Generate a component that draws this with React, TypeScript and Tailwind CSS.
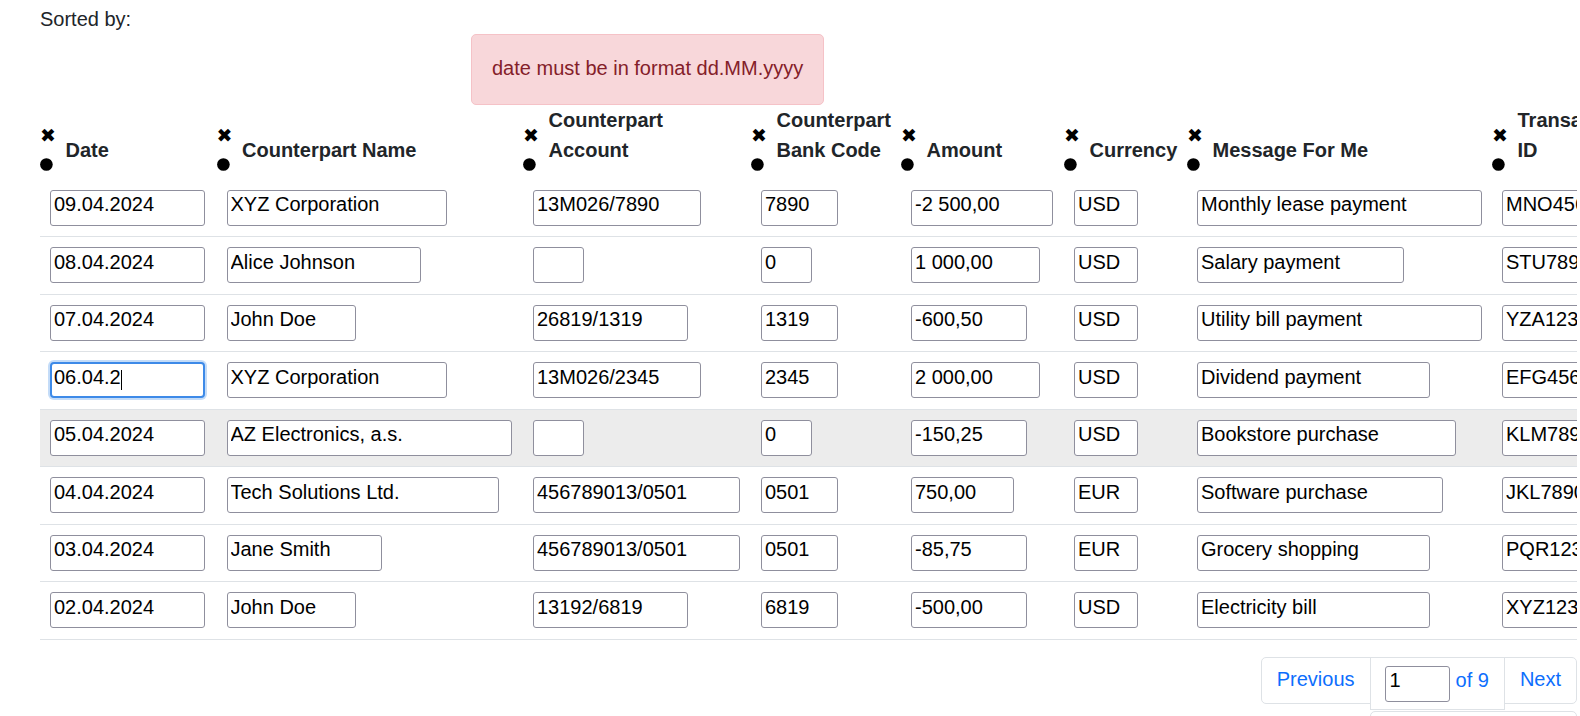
import React from "react";

type Row = {
  date: string;
  name: string;
  account: string;
  bank: string;
  amount: string;
  currency: string;
  message: string;
  id: string;
  amountSize?: number;
  focused?: boolean;
  hover?: boolean;
};

const columns = [
  { lines: ["Date"], className: "w-[176.5px]" },
  { lines: ["Counterpart Name"], className: "w-[306.5px]" },
  { lines: ["Counterpart", "Account"], className: "w-[228px]" },
  { lines: ["Counterpart", "Bank Code"], className: "w-[150px]" },
  { lines: ["Amount"], className: "w-[163px]" },
  { lines: ["Currency"], className: "w-[123px]" },
  { lines: ["Message For Me"], className: "w-[305px]" },
  { lines: ["Transaction", "ID"], className: "w-[200px]" },
];

const rows: Row[] = [
  { date: "09.04.2024", name: "XYZ Corporation", account: "13M026/7890", bank: "7890", amount: "-2 500,00", currency: "USD", message: "Monthly lease payment", id: "MNO4567890" },
  { date: "08.04.2024", name: "Alice Johnson", account: "", bank: "0", amount: "1 000,00", currency: "USD", message: "Salary payment", id: "STU7890123" },
  { date: "07.04.2024", name: "John Doe", account: "26819/1319", bank: "1319", amount: "-600,50", currency: "USD", message: "Utility bill payment", id: "YZA1234567" },
  { date: "06.04.2", name: "XYZ Corporation", account: "13M026/2345", bank: "2345", amount: "2 000,00", currency: "USD", message: "Dividend payment", id: "EFG4567890", focused: true },
  { date: "05.04.2024", name: "AZ Electronics, a.s.", account: "", bank: "0", amount: "-150,25", currency: "USD", message: "Bookstore purchase", id: "KLM7890123", hover: true },
  { date: "04.04.2024", name: "Tech Solutions Ltd.", account: "456789013/0501", bank: "0501", amount: "750,00", currency: "EUR", message: "Software purchase", id: "JKL7890123" },
  { date: "03.04.2024", name: "Jane Smith", account: "456789013/0501", bank: "0501", amount: "-85,75", currency: "EUR", message: "Grocery shopping", id: "PQR1234567", amountSize: 7 },
  { date: "02.04.2024", name: "John Doe", account: "13192/6819", bank: "6819", amount: "-500,00", currency: "USD", message: "Electricity bill", id: "XYZ1234567" },
];

// width follows the input's size attribute (chars), clamped like the original
const sizeWidth = (chars: number) => 13 * Math.min(Math.max(chars, 2), 20) + 25.4;

const CellInput = ({ value, size }: { value: string; size?: number }) => (
  <input
    readOnly
    defaultValue={value}
    style={{ width: sizeWidth(size ?? value.length) }}
    className="block h-[36px] rounded-[3px] border border-[#8f8f9d] bg-white pl-[3px] pr-[3px] pt-0 pb-[6px] text-black outline-none"
  />
);

const FocusedInput = ({ value }: { value: string }) => (
  <div className="relative w-fit">
    <input
      readOnly
      defaultValue={value}
      style={{ width: sizeWidth(10) }}
      className="block h-[36px] rounded-[4px] border-2 border-[#3d8ae8] bg-white pl-[2px] pr-[2px] pt-0 pb-[6px] text-black shadow-[0_0_0_2px_rgba(61,138,232,0.3)] outline-none"
    />
    <span className="absolute left-[71px] top-[8px] h-[20px] w-px bg-black" />
  </div>
);

const DotIcon = () => (
  <svg width="13" height="13" viewBox="0 0 13 13" className="block shrink-0">
    <circle cx="6.4" cy="6.5" r="6.3" fill="#000" />
  </svg>
);

export default function App() {
  return (
    <div className="h-[716px] w-[1577px] overflow-hidden bg-white font-['Liberation_Sans',Arial,sans-serif] text-[20px] leading-[30px] text-[#212529]">
      <div className="pl-[40px] pt-[4px]">Sorted by:</div>

      <div className="ml-[471px] w-fit rounded-[5px] border border-[#f5c2c7] bg-[#f8d7da] px-[20px] pt-[18px] pb-[21px] text-[#842029]">
        date must be in format dd.MM.yyyy
      </div>

      <div className="pl-[40px]">
        <table className="w-[1652px] table-fixed">
          <thead>
            <tr>
              {columns.map((col, i) => (
                <th key={i} className={`${col.className} p-0 text-left align-bottom font-bold`}>
                  <div className="flex items-end">
                    <div className="flex w-[15px] shrink-0 flex-col">
                      <div className="h-[30px] font-['DejaVu_Sans',sans-serif] text-[19px] leading-[30px] font-normal text-black">
                        ✖
                      </div>
                      <div className="flex h-[30px] items-center">
                        <DotIcon />
                      </div>
                    </div>
                    <div className="ml-[10.5px] pb-[14.5px]">
                      {col.lines.map((line) => (
                        <div key={line} className="whitespace-nowrap">
                          {line}
                        </div>
                      ))}
                    </div>
                  </div>
                </th>
              ))}
            </tr>
          </thead>
          <tbody>
            {rows.map((row, i) => (
              <tr key={i} className={`border-b border-[#dee2e6] ${row.hover ? "bg-[#ececec]" : ""}`}>
                <td className="py-[10.25px] pl-[10px]">
                  {row.focused ? <FocusedInput value={row.date} /> : <CellInput value={row.date} />}
                </td>
                <td className="py-[10.25px] pl-[10px]">
                  <CellInput value={row.name} />
                </td>
                <td className="py-[10.25px] pl-[10px]">
                  <CellInput value={row.account} />
                </td>
                <td className="py-[10.25px] pl-[10px]">
                  <CellInput value={row.bank} />
                </td>
                <td className="py-[10.25px] pl-[10px]">
                  <CellInput value={row.amount} size={row.amountSize} />
                </td>
                <td className="py-[10.25px] pl-[10px]">
                  <CellInput value={row.currency} />
                </td>
                <td className="py-[10.25px] pl-[10px]">
                  <CellInput value={row.message} />
                </td>
                <td className="py-[10.25px] pl-[10px]">
                  <CellInput value={row.id} />
                </td>
              </tr>
            ))}
          </tbody>
        </table>
      </div>

      <div className="mt-[17px] flex items-start justify-end">
        <div className="rounded-l-[5px] border border-[#dee2e6] px-[15px] pt-[6.5px] pb-[8.5px] text-[#0d6efd]">Previous</div>
        <div className="-ml-px flex items-baseline border border-[#dee2e6] py-[7.5px] pl-[14px] pr-[15px] text-[#0d6efd]">
          <input
            readOnly
            defaultValue="1"
            className="block h-[36px] w-[65px] rounded-[3px] border border-[#8f8f9d] bg-white pl-[4px] pt-0 pb-[6px] text-black outline-none"
          />
          <span className="ml-[6px]">of 9</span>
        </div>
        <div className="-ml-px rounded-r-[5px] border border-[#dee2e6] px-[15px] pt-[6.5px] pb-[8.5px] text-[#0d6efd]">Next</div>
      </div>
      <div className="flex justify-end">
        <div className="mt-px h-[10px] w-[207px] rounded-t-[5px] border border-[#dee2e6]" />
      </div>
    </div>
  );
}
